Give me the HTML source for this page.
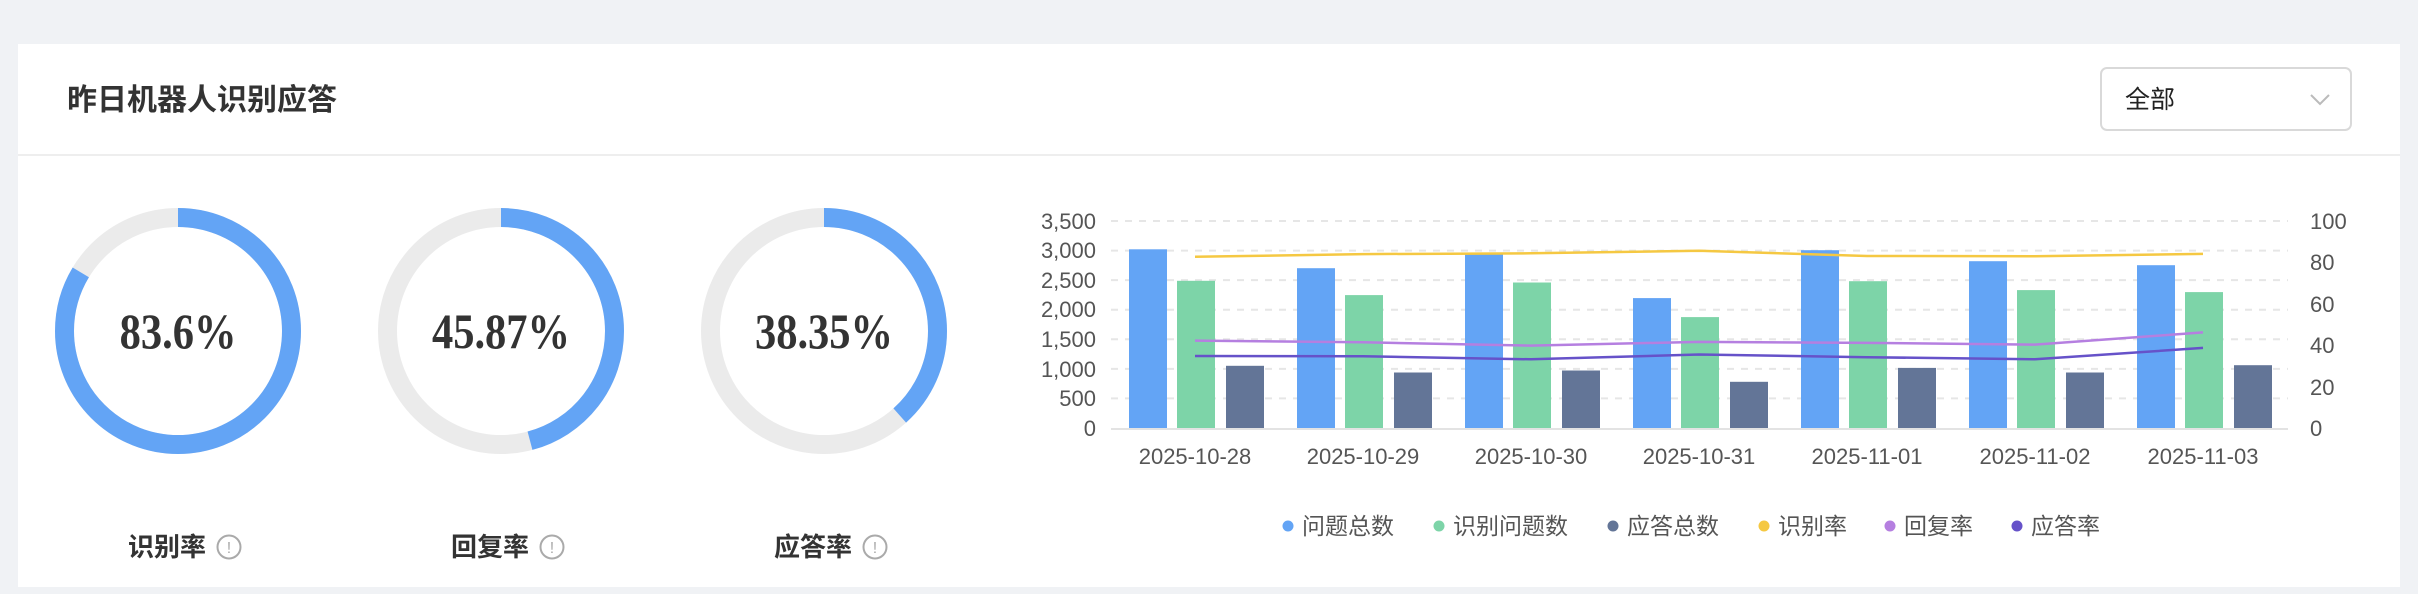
<!DOCTYPE html>
<html><head><meta charset="utf-8"><style>
html,body{margin:0;padding:0;background:#f0f2f5;width:2418px;height:594px;overflow:hidden;font-family:"Liberation Sans","Noto Sans CJK SC",sans-serif}
svg{position:absolute;left:0;top:0}
</style></head><body>
<svg width="2418" height="594" viewBox="0 0 2418 594" xmlns="http://www.w3.org/2000/svg" font-family="Liberation Sans, Noto Sans CJK SC, sans-serif">
<rect x="18" y="44" width="2382" height="543" fill="#fff"/>
<rect x="18" y="154" width="2382" height="2" fill="#eeeeee"/>
<text x="67" y="110" font-size="30" font-weight="bold" fill="#333">昨日机器人识别应答</text>
<rect x="2101" y="68" width="250" height="62" rx="6" fill="#fff" stroke="#d9d9d9" stroke-width="2"/>
<text x="2125" y="108" font-size="25" fill="#222">全部</text>
<path d="M2311 95 L2320 104 L2329 95" fill="none" stroke="#bbb" stroke-width="2"/>

<g transform="translate(178,331)">
<circle r="113.5" fill="none" stroke="#ebebeb" stroke-width="19"/>
<circle r="113.5" fill="none" stroke="#63a4f5" stroke-width="19" stroke-dasharray="596.2 800" transform="rotate(-90)"/>
<text x="0" y="17" text-anchor="middle" font-family="Liberation Serif, serif" font-weight="bold" font-size="50" fill="#333" transform="scale(0.85,1)">83.6%</text>
</g>
<g transform="translate(501,331)">
<circle r="113.5" fill="none" stroke="#ebebeb" stroke-width="19"/>
<circle r="113.5" fill="none" stroke="#63a4f5" stroke-width="19" stroke-dasharray="327.1 800" transform="rotate(-90)"/>
<text x="0" y="17" text-anchor="middle" font-family="Liberation Serif, serif" font-weight="bold" font-size="50" fill="#333" transform="scale(0.85,1)">45.87%</text>
</g>
<g transform="translate(824,331)">
<circle r="113.5" fill="none" stroke="#ebebeb" stroke-width="19"/>
<circle r="113.5" fill="none" stroke="#63a4f5" stroke-width="19" stroke-dasharray="273.5 800" transform="rotate(-90)"/>
<text x="0" y="17" text-anchor="middle" font-family="Liberation Serif, serif" font-weight="bold" font-size="50" fill="#333" transform="scale(0.85,1)">38.35%</text>
</g>
<g font-size="26" font-weight="bold" fill="#333">
<text x="128" y="556">识别率</text>
<text x="451" y="556">回复率</text>
<text x="774" y="556">应答率</text>
</g>
<g fill="none" stroke="#aaa" stroke-width="2">
<circle cx="229" cy="547" r="11.5"/><circle cx="552" cy="547" r="11.5"/><circle cx="875" cy="547" r="11.5"/>
</g>
<g fill="#aaa" font-size="16" text-anchor="middle">
<text x="229" y="553">!</text><text x="552" y="553">!</text><text x="875" y="553">!</text>
</g>

<g stroke="#e6e6e6" stroke-width="2" stroke-dasharray="7 7">
<line x1="1111" x2="2288" y1="221" y2="221"/><line x1="1111" x2="2288" y1="250.6" y2="250.6"/>
<line x1="1111" x2="2288" y1="280.1" y2="280.1"/><line x1="1111" x2="2288" y1="309.7" y2="309.7"/>
<line x1="1111" x2="2288" y1="339.3" y2="339.3"/><line x1="1111" x2="2288" y1="368.9" y2="368.9"/>
<line x1="1111" x2="2288" y1="398.4" y2="398.4"/>
</g>
<line x1="1111" x2="2288" y1="429" y2="429" stroke="#e3e3e3" stroke-width="2"/>
<g font-size="22" fill="#555" text-anchor="end">
<text x="1096" y="229">3,500</text><text x="1096" y="258">3,000</text><text x="1096" y="288">2,500</text>
<text x="1096" y="317">2,000</text><text x="1096" y="347">1,500</text><text x="1096" y="377">1,000</text>
<text x="1096" y="406">500</text><text x="1096" y="436">0</text>
</g>
<g font-size="22" fill="#555">
<text x="2310" y="229">100</text><text x="2310" y="270">80</text><text x="2310" y="312">60</text>
<text x="2310" y="353">40</text><text x="2310" y="395">20</text><text x="2310" y="436">0</text>
</g>
<g fill="#63a4f5">
<rect x="1129" y="249.3" width="38" height="178.7"/>
<rect x="1297" y="268.2" width="38" height="159.8"/>
<rect x="1465" y="253.6" width="38" height="174.4"/>
<rect x="1633" y="298.1" width="38" height="129.9"/>
<rect x="1801" y="250.2" width="38" height="177.8"/>
<rect x="1969" y="261.2" width="38" height="166.8"/>
<rect x="2137" y="265.2" width="38" height="162.8"/>
</g>
<g fill="#7dd4a8">
<rect x="1177" y="280.8" width="38" height="147.2"/>
<rect x="1345" y="295.1" width="38" height="132.9"/>
<rect x="1513" y="282.5" width="38" height="145.5"/>
<rect x="1681" y="317.1" width="38" height="110.9"/>
<rect x="1849" y="281.2" width="38" height="146.8"/>
<rect x="2017" y="290.1" width="38" height="137.9"/>
<rect x="2185" y="292.1" width="38" height="135.9"/>
</g>
<g fill="#637597">
<rect x="1226" y="365.8" width="38" height="62.2"/>
<rect x="1394" y="372.5" width="38" height="55.5"/>
<rect x="1562" y="370.5" width="38" height="57.5"/>
<rect x="1730" y="381.8" width="38" height="46.2"/>
<rect x="1898" y="367.9" width="38" height="60.1"/>
<rect x="2066" y="372.5" width="38" height="55.5"/>
<rect x="2234" y="365.2" width="38" height="62.8"/>
</g>
<g fill="none" stroke-width="2.5">
<polyline stroke="#f5c842" points="1195,256.8 1363,254.1 1531,253.3 1699,250.8 1867,256 2035,256.2 2203,253.9"/>
<polyline stroke="#b57fe0" points="1195,340.6 1363,342.3 1531,345.6 1699,341.9 1867,342.9 2035,344.6 2203,332.4"/>
<polyline stroke="#6652c9" points="1195,356 1363,356.2 1531,359.3 1699,354.5 1867,357.2 2035,359.3 2203,347.9"/>
</g>
<g font-size="22" fill="#555" text-anchor="middle">
<text x="1195" y="464">2025-10-28</text><text x="1363" y="464">2025-10-29</text><text x="1531" y="464">2025-10-30</text>
<text x="1699" y="464">2025-10-31</text><text x="1867" y="464">2025-11-01</text><text x="2035" y="464">2025-11-02</text>
<text x="2203" y="464">2025-11-03</text>
</g>
<g font-size="23" fill="#555">
<circle cx="1288" cy="526" r="5.5" fill="#63a4f5"/><text x="1302" y="534">问题总数</text>
<circle cx="1439" cy="526" r="5.5" fill="#7dd4a8"/><text x="1453" y="534">识别问题数</text>
<circle cx="1613" cy="526" r="5.5" fill="#637597"/><text x="1627" y="534">应答总数</text>
<circle cx="1764" cy="526" r="5.5" fill="#f5c842"/><text x="1778" y="534">识别率</text>
<circle cx="1890" cy="526" r="5.5" fill="#b57fe0"/><text x="1904" y="534">回复率</text>
<circle cx="2017" cy="526" r="5.5" fill="#6652c9"/><text x="2031" y="534">应答率</text>
</g>
</svg>
</body></html>
